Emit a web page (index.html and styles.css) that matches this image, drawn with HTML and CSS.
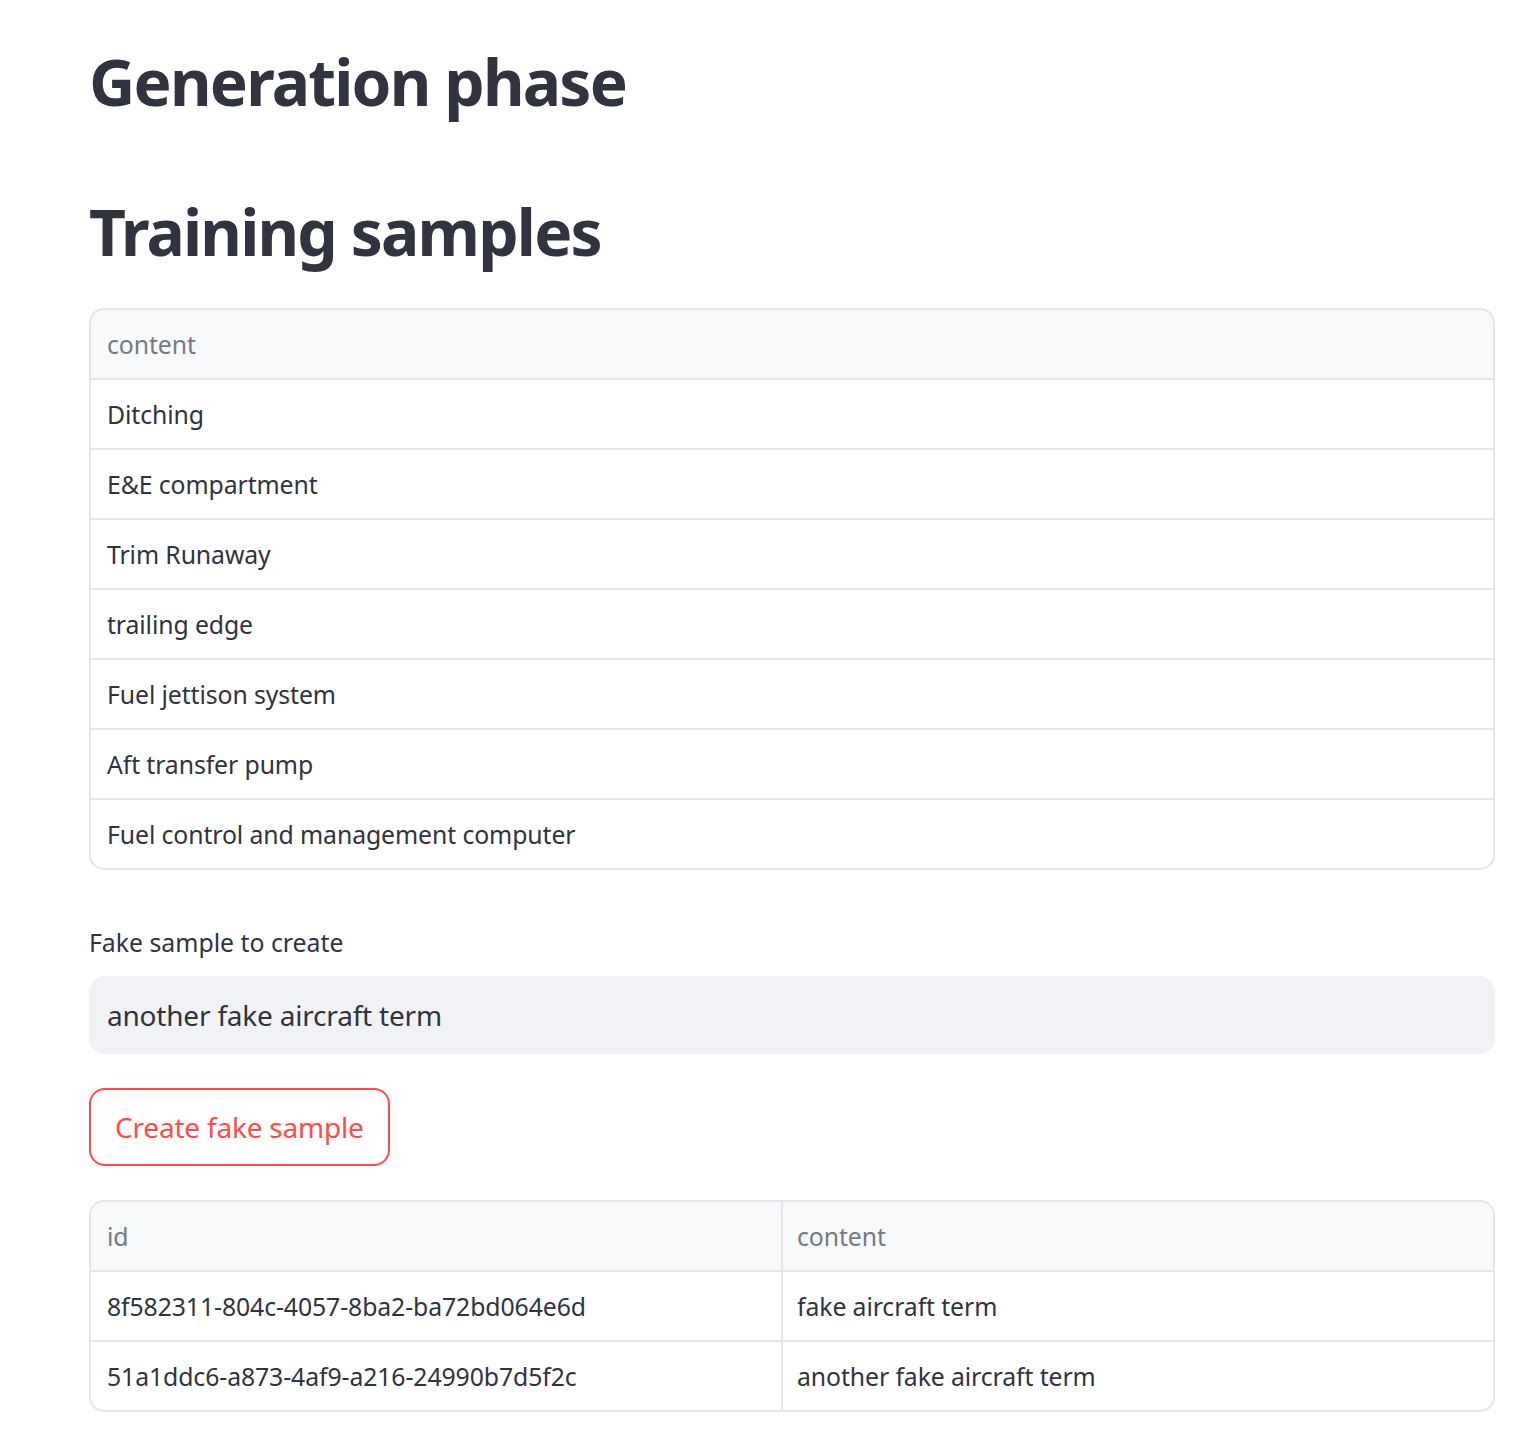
FILE: index.html
```html
<!DOCTYPE html>
<html lang="en">
<head>
<meta charset="utf-8">
<title>Generation phase</title>
<link rel="stylesheet" href="styles.css">
</head>
<body>
<main class="page">
  <h1 class="title">Generation phase</h1>
  <h2 class="title title-second">Training samples</h2>

  <div class="df df-one">
    <div class="df-row df-head"><div class="cell">content</div></div>
    <div class="df-row"><div class="cell">Ditching</div></div>
    <div class="df-row"><div class="cell">E&amp;E compartment</div></div>
    <div class="df-row"><div class="cell">Trim Runaway</div></div>
    <div class="df-row"><div class="cell">trailing edge</div></div>
    <div class="df-row"><div class="cell">Fuel jettison system</div></div>
    <div class="df-row"><div class="cell">Aft transfer pump</div></div>
    <div class="df-row"><div class="cell">Fuel control and management computer</div></div>
  </div>

  <label class="field-label" for="fake">Fake sample to create</label>
  <input class="field-input" id="fake" type="text" value="another fake aircraft term">

  <button class="btn" type="button">Create fake sample</button>

  <div class="df df-two">
    <div class="df-row df-head"><div class="cell">id</div><div class="cell">content</div></div>
    <div class="df-row"><div class="cell">8f582311-804c-4057-8ba2-ba72bd064e6d</div><div class="cell">fake aircraft term</div></div>
    <div class="df-row"><div class="cell">51a1ddc6-a873-4af9-a216-24990b7d5f2c</div><div class="cell">another fake aircraft term</div></div>
  </div>
</main>
</body>
</html>
```

FILE: styles.css
```css
* { box-sizing: border-box; }

html, body {
  margin: 0;
  padding: 0;
  background: #ffffff;
}

body {
  font-family: "Noto Sans", "Open Sans", sans-serif;
  color: #31333f;
}

.page {
  padding: 42px 19px 40px 89px;
  display: flex;
  flex-direction: column;
  align-items: stretch;
}

.title {
  margin: 0;
  font-size: 64px;
  line-height: 80px;
  font-weight: 700;
  letter-spacing: -1.8px;
  color: #31333f;
}

.title-second {
  margin-top: 70px;
}

.df {
  border: 2px solid #e6e6ea;
  border-radius: 15px;
  overflow: hidden;
  background: #ffffff;
}

.df-one { margin-top: 36px; }
.df-two { margin-top: 34px; }

.df-row {
  display: grid;
  grid-template-columns: 1fr;
  height: 70px;
  border-top: 2px solid #e6e6ea;
}

.df-row:first-child {
  border-top: none;
  height: 68px;
}

.df-two .df-row {
  grid-template-columns: 690px 1fr;
}

.df-two .cell + .cell {
  border-left: 2px solid #e6e6ea;
}

.cell {
  display: flex;
  align-items: center;
  padding: 0 16px;
  font-size: 24.8px;
  letter-spacing: -0.1px;
  color: #31333f;
  white-space: nowrap;
}

.df-two .cell + .cell {
  padding-left: 14px;
}

.df-head {
  background: #f8f9fb;
}

.df-head .cell {
  color: #777981;
}

.field-label {
  margin-top: 54px;
  font-size: 24.8px;
  line-height: 36px;
  color: #31333f;
}

.field-input {
  margin-top: 16px;
  height: 78px;
  border: none;
  border-radius: 16px;
  background: #f0f2f6;
  padding: 0 18px;
  font-family: "Noto Sans", "Open Sans", sans-serif;
  font-size: 28px;
  letter-spacing: -0.2px;
  color: #31333f;
  outline: none;
}

.btn {
  align-self: flex-start;
  margin-top: 34px;
  height: 78px;
  padding: 0 24px;
  border: 2px solid #ff4b4b;
  border-radius: 16px;
  background: #ffffff;
  color: #ff4b4b;
  font-family: "Noto Sans", "Open Sans", sans-serif;
  font-size: 28px;
  letter-spacing: -0.2px;
  cursor: pointer;
}
```
